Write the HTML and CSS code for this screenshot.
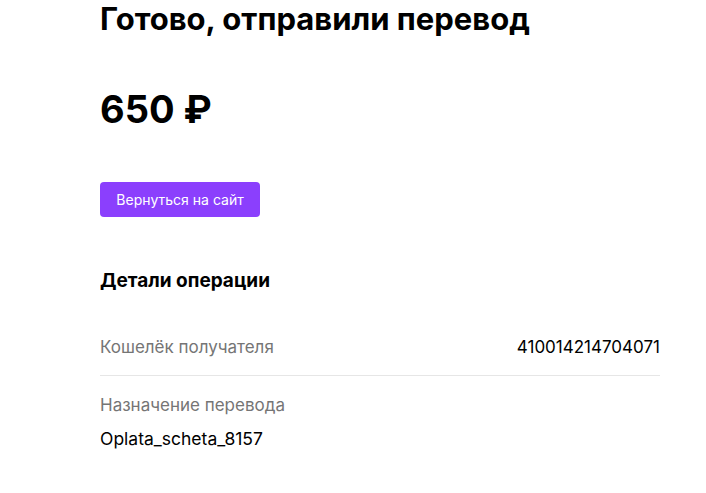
FILE: index.html
```html
<!DOCTYPE html>
<html lang="ru">
<head>
<meta charset="utf-8">
<link rel="stylesheet" href="styles.css">
</head>
<body>
<main class="page">
  <h1 class="title">Готово, отправили перевод</h1>
  <div class="amount">650 ₽</div>
  <button class="btn">Вернуться на сайт</button>
  <h2 class="subtitle">Детали операции</h2>
  <div class="row row--split">
    <span class="label">Кошелёк получателя</span>
    <span class="value">410014214704071</span>
  </div>
  <div class="row">
    <div class="label">Назначение перевода</div>
    <div class="value value--block">Oplata_scheta_8157</div>
  </div>
</main>
</body>
</html>
```
FILE: styles.css
```css
html, body {
  margin: 0;
  padding: 0;
  background: #fff;
}
body {
  font-family: Inter, "Noto Sans", sans-serif;
  color: #000;
}
.page {
  width: 560px;
  margin-left: 100px;
  display: flex;
  flex-direction: column;
  align-items: flex-start;
}
.title {
  margin: 0;
  font-size: 31px;
  line-height: 40px;
  font-weight: 700;
  margin-top: -1px;
}
.amount {
  margin-top: 46px;
  font-size: 38px;
  line-height: 48px;
  font-weight: 700;
}
.btn {
  margin-top: 49px;
  height: 35px;
  width: 160px;
  border: none;
  border-radius: 4px;
  background: #8b3ffd;
  color: #fff;
  font-family: inherit;
  font-size: 14px;
  padding: 0;
}
.subtitle {
  margin: 0;
  margin-top: 51px;
  font-size: 19px;
  line-height: 26px;
  font-weight: 700;
}
.row {
  align-self: stretch;
  padding: 17px 0 0;
}
.row--split {
  margin-top: 41px;
  padding: 0 0 16px;
  display: flex;
  justify-content: space-between;
  border-bottom: 1px solid #e6e6e6;
}
.label {
  color: #757575;
  font-size: 17px;
  line-height: 24px;
}
.value {
  font-size: 17px;
  line-height: 24px;
}
.value--block {
  margin-top: 10px;
  font-size: 17.5px;
}
```
